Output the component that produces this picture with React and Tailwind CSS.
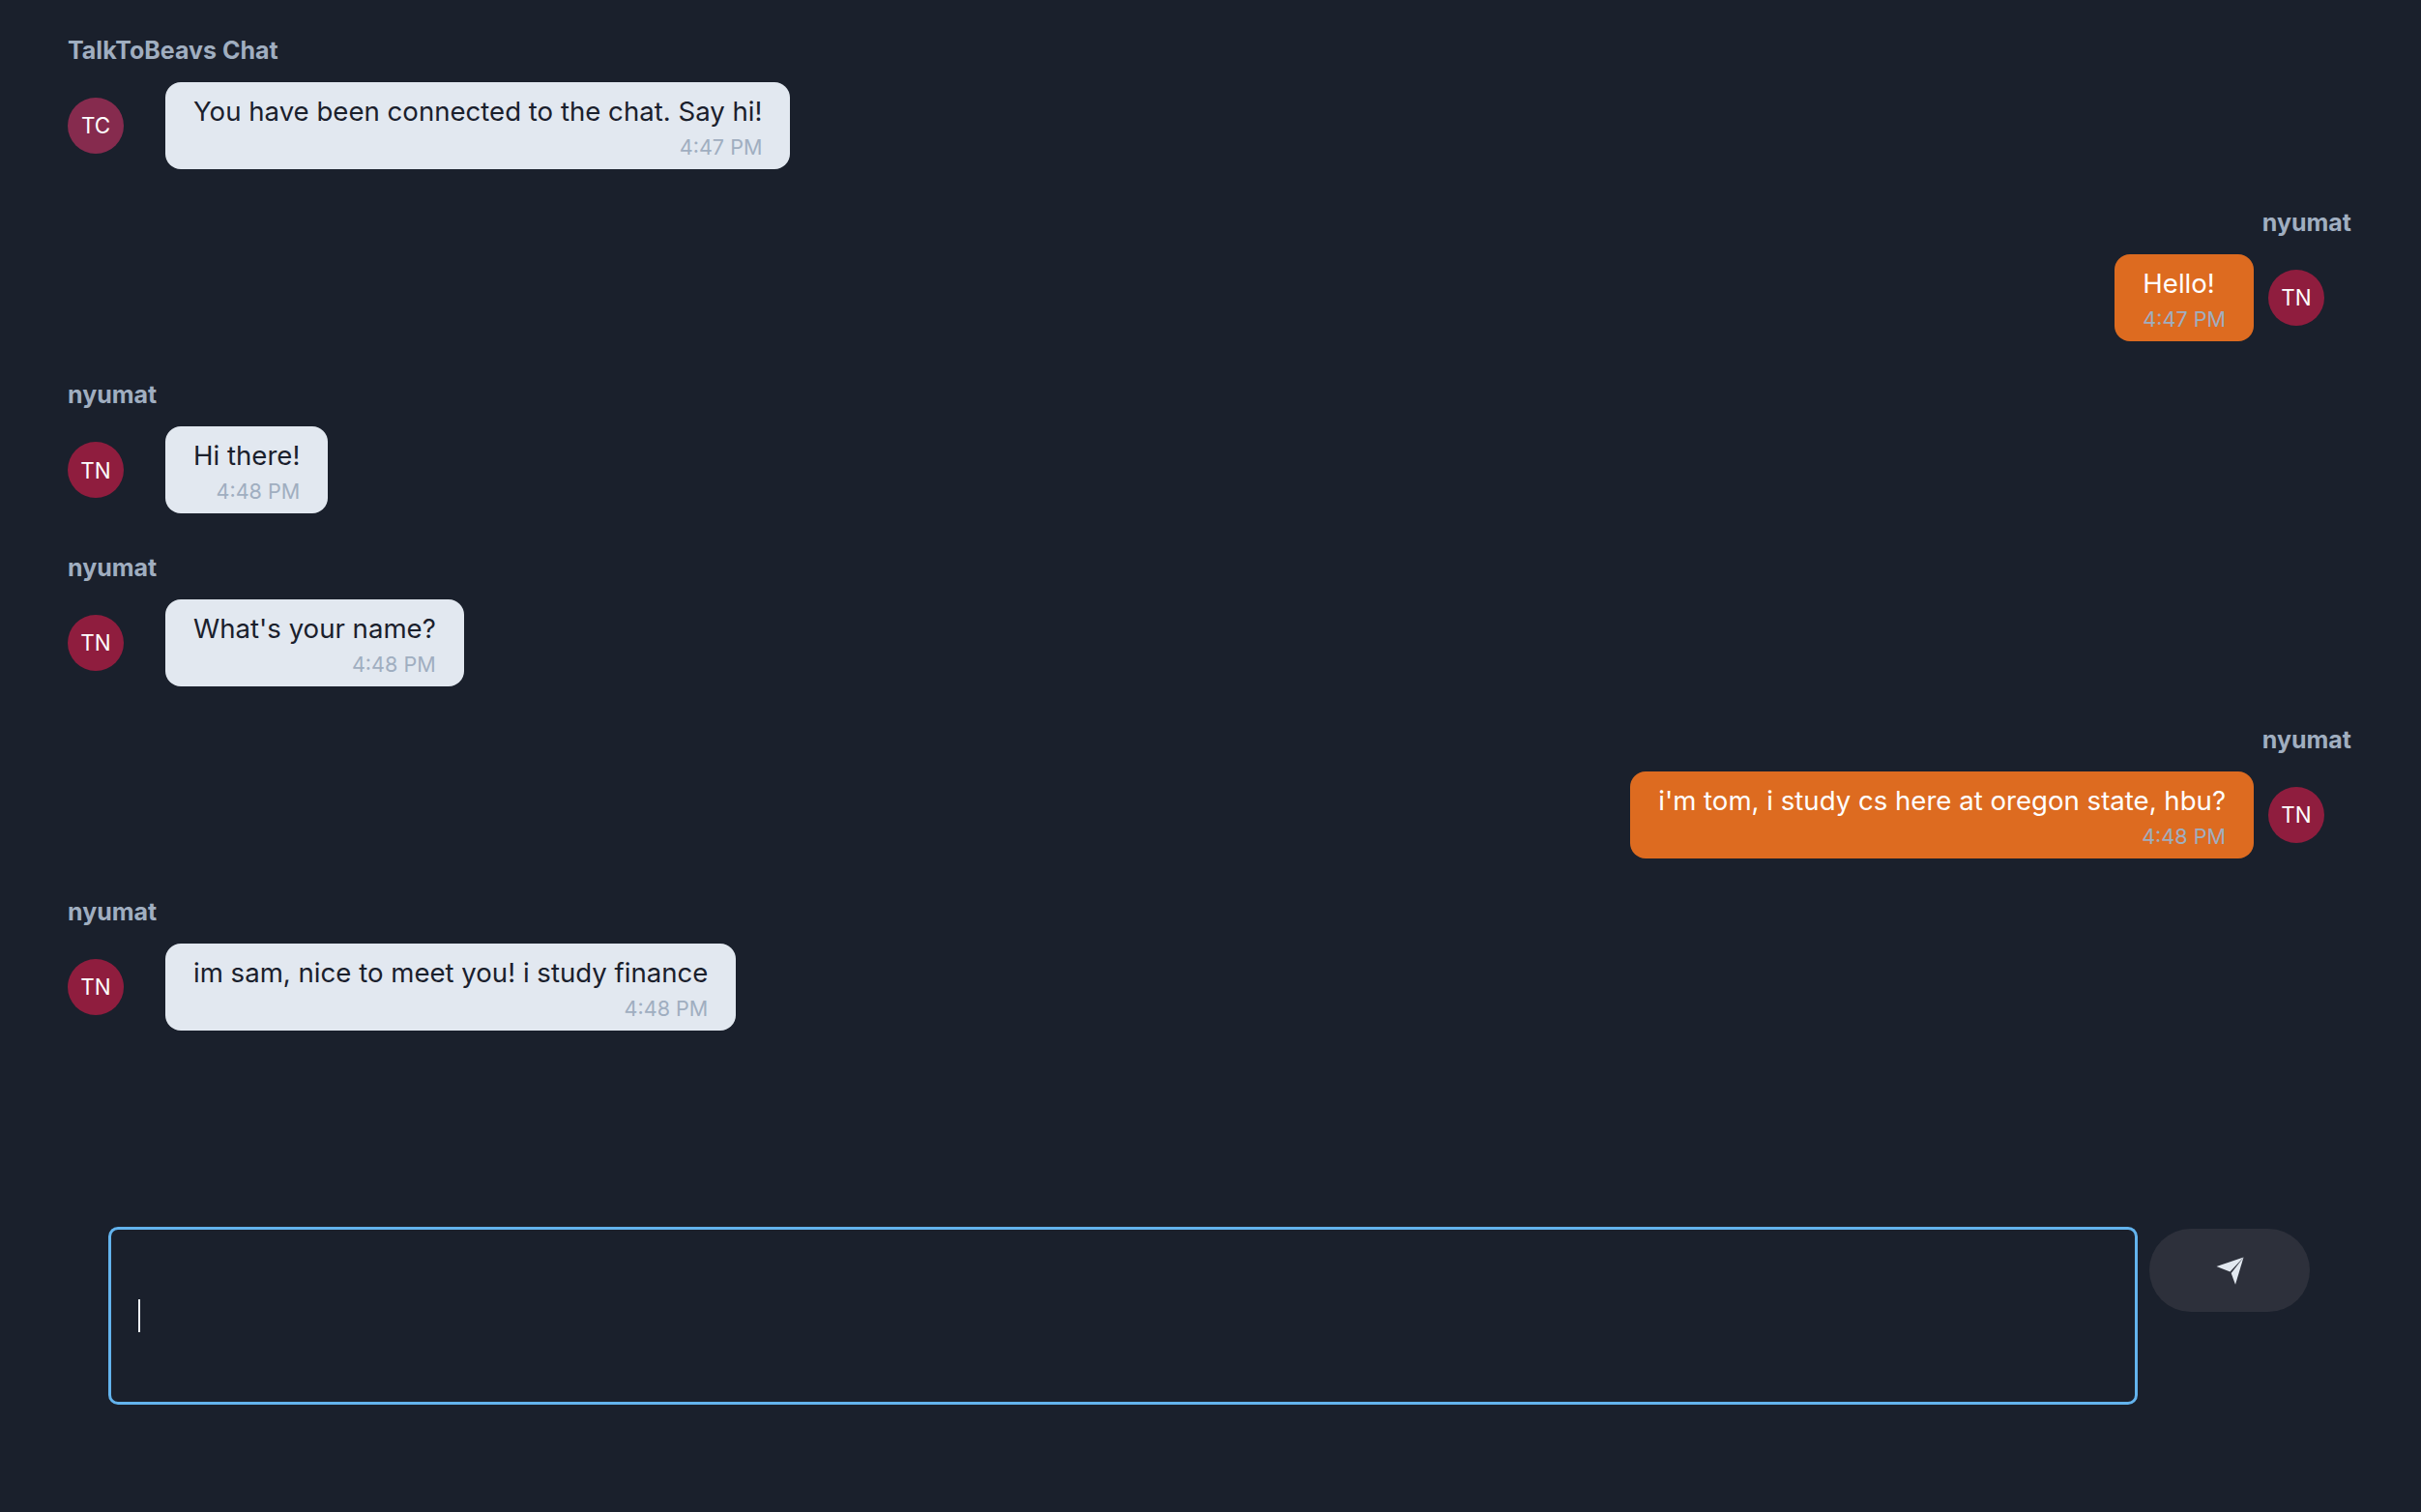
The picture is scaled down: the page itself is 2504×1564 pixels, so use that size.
const messages = [
  { name: 'TalkToBeavs Chat', initials: 'TC', text: 'You have been connected to the chat. Say hi!', time: '4:47 PM', avatar: 'bg-[#862b4e]' },
  { name: 'nyumat', initials: 'TN', text: 'Hello!', time: '4:47 PM', mine: true },
  { name: 'nyumat', initials: 'TN', text: 'Hi there!', time: '4:48 PM' },
  { name: 'nyumat', initials: 'TN', text: "What's your name?", time: '4:48 PM' },
  { name: 'nyumat', initials: 'TN', text: "i'm tom, i study cs here at oregon state, hbu?", time: '4:48 PM', mine: true },
  { name: 'nyumat', initials: 'TN', text: 'im sam, nice to meet you! i study finance', time: '4:48 PM' },
];

function Message({ name, initials, text, time, mine, avatar }) {
  return (
    <div className={`flex flex-col h-[178.2px] ${mine ? 'items-end' : 'items-start'}`}>
      <p className="text-[25px] leading-[33px] font-bold text-[#a0aec0] mb-[16px]">{name}</p>
      <div className={`flex items-center ${mine ? 'flex-row-reverse' : ''}`}>
        <div
          className={`w-[58px] h-[58px] rounded-full flex items-center justify-center text-white text-[22.4px] ${avatar || 'bg-[#8f1d3e]'} ${mine ? 'ml-[15px] mr-[28px]' : 'mr-[43px]'}`}
        >
          {initials}
        </div>
        <div className={`rounded-[16px] px-[29px] pt-[11px] h-[90px] ${mine ? 'bg-[#dd6b20] text-white' : 'bg-[#e2e8f0] text-[#1a202c]'}`}>
          <p className="text-[27.6px] leading-[38px]">{text}</p>
          <p className="text-[21.6px] leading-[36px] text-right text-[#a0aec0]">{time}</p>
        </div>
      </div>
    </div>
  );
}

export default function App() {
  return (
    <div className="w-full h-[1564px] bg-[#1a202c] font-['Inter',sans-serif] overflow-hidden">
      <div className="pl-[70px] pr-[72px] pt-[36px] h-[1269px]">
        {messages.map((m, i) => (
          <Message key={i} {...m} />
        ))}
      </div>
      <div className="flex items-start pl-[112px]">
        <div className="w-[2099px] h-[184px] rounded-[10px] border-[3px] border-[#63b3ed] flex items-center pl-[28px]">
          <span className="w-[2px] h-[34px] bg-[#edf2f7]" />
        </div>
        <button className="ml-[12px] mt-[2px] w-[166px] h-[86px] rounded-full bg-[#2d303b] flex items-center justify-center">
          <svg width="29" height="29" viewBox="0 0 29 29">
            <path d="M28.5 0.5 L0.5 10 L14.5 15.5 Z" fill="#e2e8f0" />
            <path d="M28.5 0.5 L15.7 17 L20 28.8 Z" fill="#e2e8f0" />
          </svg>
        </button>
      </div>
    </div>
  );
}
